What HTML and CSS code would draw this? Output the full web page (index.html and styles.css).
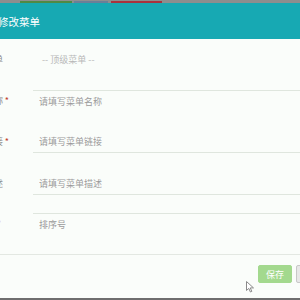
FILE: index.html
```html
<!DOCTYPE html>
<html lang="zh-CN">
<head>
    <meta charset="UTF-8">
    <title>修改菜单</title>
    <link rel="stylesheet" href="styles.css">
</head>
<body>
    <div class="topbar">
        <span class="seg seg-green"></span>
        <span class="seg seg-blue"></span>
        <span class="seg seg-red"></span>
    </div>

    <div class="modal">
        <div class="modal-header">
            <h4 class="modal-title">编辑修改菜单</h4>
        </div>

        <form class="modal-body">
            <div class="form-row">
                <label class="form-label">上级菜单<i class="req"></i></label>
                <div class="select-value">-- 顶级菜单 --</div>
            </div>
            <div class="form-row">
                <label class="form-label">菜单名称<i class="req">*</i></label>
                <input type="text" class="form-input line-top" placeholder="请填写菜单名称">
            </div>
            <div class="form-row">
                <label class="form-label">菜单链接<i class="req">*</i></label>
                <input type="text" class="form-input line-bottom" placeholder="请填写菜单链接">
            </div>
            <div class="form-row row-desc">
                <label class="form-label">菜单描述<i class="req"></i></label>
                <input type="text" class="form-input line-bottom" placeholder="请填写菜单描述">
            </div>
            <div class="form-row">
                <label class="form-label short">排序号<i class="req">*</i></label>
                <input type="text" class="form-input line-top" placeholder="排序号">
            </div>
        </form>

        <div class="modal-footer">
            <button type="button" class="btn btn-save">保存</button>
            <button type="button" class="btn btn-cancel">取消</button>
            <!-- mouse pointer caught in the capture -->
            <svg class="pointer" width="9" height="12" viewBox="0 0 9 12">
                <path d="M0.5 0.5 L0.5 9.5 L2.8 7.4 L4.4 11 L5.8 10.4 L4.3 6.9 L7.5 6.9 Z" fill="#fff" stroke="#8a8a8a" stroke-width="1"/>
            </svg>
        </div>
    </div>

    <div class="bottombar"></div>
</body>
</html>
```

FILE: styles.css
```css
body {
    margin: 0;
    width: 300px;
    height: 300px;
    overflow: hidden;
    font-family: "Noto Sans CJK SC", "Noto Sans", sans-serif;
    background-color: #fafdfa;
}

/* Strip of the page behind the dialog */
.topbar {
    height: 3px;
    background-color: #8e8e8e;
    display: flex;
    align-items: flex-start;
    gap: 2px;
    padding-left: 20px;
}

.seg {
    height: 2px;
    margin-top: 1px;
}

.seg-green {
    width: 52px;
    background-color: #4f8a45;
}

.seg-blue {
    width: 34px;
    background-color: #6a7f98;
}

.seg-red {
    width: 51px;
    margin-left: 1px;
    background-color: #a9323d;
}

.modal {
    position: relative;
    overflow: hidden;
}

.modal-header {
    height: 36px;
    background-color: #17a9b3;
    display: flex;
    align-items: center;
}

.modal-title {
    margin: 0 0 0 -23px;
    color: #fff;
    font-size: 10.5px;
    font-weight: normal;
}

.modal-body {
    height: 215px;
    margin: 0;
    padding-top: 10px;
    box-sizing: border-box;
    display: flex;
    flex-direction: column;
    gap: 19px;
}

.form-row {
    display: grid;
    grid-template-columns: 70px 1fr;
    height: 22px;
    margin-left: -37px;
}

.row-desc {
    margin-top: 1px;
    margin-bottom: -1px;
}

.form-label {
    font-size: 9px;
    color: #8a8a8a;
    text-align: right;
    padding-right: 24px;
    line-height: 22px;
    white-space: nowrap;
}

/* the last label sits further left in the capture */
.form-label.short {
    padding-right: 32px;
}

.req {
    display: inline-block;
    width: 6px;
    font-style: normal;
    color: #c0392b;
    text-align: right;
}

.select-value {
    font-size: 9px;
    color: #b8b8b8;
    line-height: 22px;
    padding-left: 9px;
}

.form-input {
    height: 22px;
    box-sizing: border-box;
    border: none;
    background: transparent;
    padding: 0 6px;
    font-family: inherit;
    font-size: 9px;
    color: #555;
    outline: none;
}

.form-input::placeholder {
    color: #9a9a9a;
}

.line-top {
    border-top: 1px solid #dfe6de;
}

.line-bottom {
    border-bottom: 1px solid #dfe6de;
}

.modal-footer {
    height: 44px;
    box-sizing: border-box;
    border-top: 1px solid #e3e8e2;
    padding-top: 10px;
    display: flex;
    justify-content: flex-end;
    align-items: flex-start;
    gap: 4px;
    margin-right: -28px;
}

.btn {
    height: 18px;
    border-radius: 2px;
    font-family: inherit;
    font-size: 9px;
    color: #fff;
    padding: 0;
    cursor: pointer;
}

.btn-save {
    width: 34px;
    background-color: #a3d98e;
    border: 1px solid #a3d98e;
}

.btn-cancel {
    width: 32px;
    background-color: #e8e8e8;
    border: 1px solid #c8c8c8;
    color: #666;
}

.pointer {
    position: absolute;
    left: 246px;
    top: 278px;
}

.bottombar {
    height: 5px;
    background-color: #6e6e6e;
}
```
